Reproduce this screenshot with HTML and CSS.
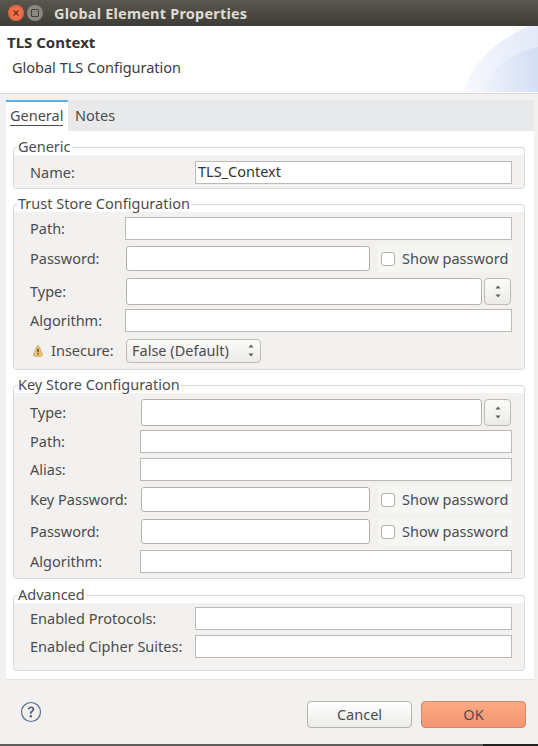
FILE: index.html
```html
<!DOCTYPE html>
<html lang="en">
<head>
  <meta charset="UTF-8">
  <title>Global Element Properties</title>
  <link rel="stylesheet" href="styles.css">
</head>
<body>
  <div class="titlebar">
    <span class="wbtn close">
      <svg width="8" height="8" viewBox="0 0 8 8"><path d="M1.500 1.500l5 5M6.500 1.500l-5 5" stroke="#6e2a16" stroke-width="1.400"/></svg>
    </span>
    <span class="wbtn max"><span class="max-box"></span></span>
    <span class="wtitle">Global Element Properties</span>
  </div>

  <div class="header">
    <svg class="swoosh" width="74" height="66" viewBox="0 0 74 66">
      <defs>
        <linearGradient id="sw1" x1="0" y1="0" x2="1" y2="0"><stop offset="0" stop-color="#f6f8fd"/><stop offset="1" stop-color="#e3e9f8"/></linearGradient>
        <linearGradient id="sw2" x1="0" y1="0" x2="1" y2="0"><stop offset="0" stop-color="#f0f3fb"/><stop offset="1" stop-color="#d3def4"/></linearGradient>
      </defs>
      <path d="M0 66C4 42 30 15 65 0H74V66Z" fill="url(#sw1)"/>
      <path d="M18 66C24 43 48 26 74 21V66Z" fill="url(#sw2)"/>
    </svg>
    <div class="head-title">TLS Context</div>
    <div class="head-desc">Global TLS Configuration</div>
  </div>

  <div class="tabfolder">
    <div class="tabbar">
      <div class="tab active"><span class="tab-u">General</span></div>
      <div class="tab">Notes</div>
    </div>
    <div class="tabbody">

      <fieldset class="group group-generic">
        <legend>Generic</legend>
        <div class="group-body">
          <div class="row">
            <label>Name:</label>
            <div class="input">TLS_Context</div>
          </div>
        </div>
      </fieldset>

      <fieldset class="group group-trust">
        <legend>Trust Store Configuration</legend>
        <div class="group-body">
          <div class="row">
            <label>Path:</label>
            <div class="input"></div>
          </div>
          <div class="row">
            <label>Password:</label>
            <div class="entry"></div>
            <div class="showpw"><span class="check"></span>Show password</div>
          </div>
          <div class="row">
            <label>Type:</label>
            <div class="entry tall"></div>
            <div class="spin">
              <svg width="8" height="13" viewBox="0 0 8 13"><path d="M4 .5L6.500 3.500H1.500ZM4 12.500L1.500 9.500H6.500Z" fill="#5f5c58"/></svg>
            </div>
          </div>
          <div class="row">
            <label>Algorithm:</label>
            <div class="input"></div>
          </div>
          <div class="row">
            <label class="warn-label">
              <svg class="warn" width="10" height="12" viewBox="0 0 10 12"><path d="M5 .7C5.900.7 6.300 1.500 6.600 2.400L9.200 9C9.600 10.200 9 11.300 7.800 11.300H2.200C1 11.300 .4 10.200 .8 9L3.400 2.400C3.700 1.500 4.100.7 5 .7Z" fill="#eec770" stroke="#c09a48" stroke-width=".7"/><path d="M4.300 3.800H5.700V7.300H4.300ZM4.300 8.200H5.700V9.600H4.300Z" fill="#4e3a10"/></svg>
              Insecure:
            </label>
            <div class="combo">False (Default)
              <svg width="8" height="13" viewBox="0 0 8 13"><path d="M4 .5L6.500 3.500H1.500ZM4 12.500L1.500 9.500H6.500Z" fill="#5f5c58"/></svg>
            </div>
          </div>
        </div>
      </fieldset>

      <fieldset class="group group-key">
        <legend>Key Store Configuration</legend>
        <div class="group-body">
          <div class="row">
            <label>Type:</label>
            <div class="entry tall"></div>
            <div class="spin">
              <svg width="8" height="13" viewBox="0 0 8 13"><path d="M4 .5L6.500 3.500H1.500ZM4 12.500L1.500 9.500H6.500Z" fill="#5f5c58"/></svg>
            </div>
          </div>
          <div class="row">
            <label>Path:</label>
            <div class="input"></div>
          </div>
          <div class="row">
            <label>Alias:</label>
            <div class="input"></div>
          </div>
          <div class="row">
            <label>Key Password:</label>
            <div class="entry"></div>
            <div class="showpw"><span class="check"></span>Show password</div>
          </div>
          <div class="row">
            <label>Password:</label>
            <div class="entry"></div>
            <div class="showpw"><span class="check"></span>Show password</div>
          </div>
          <div class="row">
            <label>Algorithm:</label>
            <div class="input"></div>
          </div>
        </div>
      </fieldset>

      <fieldset class="group group-adv">
        <legend>Advanced</legend>
        <div class="group-body">
          <div class="row">
            <label>Enabled Protocols:</label>
            <div class="input"></div>
          </div>
          <div class="row">
            <label>Enabled Cipher Suites:</label>
            <div class="input"></div>
          </div>
        </div>
      </fieldset>

    </div>
  </div>

  <div class="footer">
    <svg class="help" width="22" height="22" viewBox="0 0 22 22">
      <circle cx="11" cy="11" r="9.500" fill="none" stroke="#5a6d8c" stroke-width="1.200"/>
      <path d="M7.800 8.300C8 6.500 9.400 5.600 11.100 5.600c1.900 0 3.200 1.100 3.200 2.700 0 2.300-2.700 2.300-2.700 4.500H9.900c0-3 2.600-3 2.600-4.500 0-.8-.6-1.300-1.400-1.300-.9 0-1.400.5-1.600 1.300Z" fill="#4a5d7e"/>
      <circle cx="10.800" cy="15.200" r="1.200" fill="#4a5d7e"/>
    </svg>
    <div class="btn cancel">Cancel</div>
    <div class="btn ok">OK</div>
  </div>
  <div class="bottom-edge"></div>
</body>
</html>
```

FILE: styles.css
```css
html, body {
  margin: 0;
  padding: 0;
}
body {
  width: 538px;
  height: 746px;
  overflow: hidden;
  background: #f2f1f0;
  font-family: "Noto Sans", "Open Sans", sans-serif;
  font-size: 14.500px;
  color: #4c4c4c;
}
.titlebar {
  height: 26px;
  display: flex;
  align-items: center;
  background: linear-gradient(#5a5750, #3e3c36);
  padding-left: 8px;
}
.wbtn {
  width: 16px;
  height: 16px;
  border-radius: 50%;
  display: flex;
  align-items: center;
  justify-content: center;
  margin-right: 3px;
}
.close {
  background: radial-gradient(#f6805c, #e2572e);
}
.max {
  background: #8a8880;
}
.max-box {
  width: 6px;
  height: 6px;
  border: 1px solid #44423c;
  border-radius: 1px;
}
.wtitle {
  margin-left: 8px;
  color: #dfdbd2;
  font-size: 14.500px;
  font-weight: 700;
  letter-spacing: .2px;
}
.header {
  position: relative;
  height: 68px;
  background: #fff;
  border-bottom: 1px solid #d8d7d5;
  box-sizing: border-box;
}
.swoosh {
  position: absolute;
  right: 0;
  top: 0;
}
.head-title {
  padding: 7px 0 0 7px;
  font-size: 15px;
  font-weight: 700;
  color: #333;
  line-height: 18px;
}
.head-desc {
  padding: 7px 0 0 12px;
  line-height: 19px;
  color: #3c3c3c;
}
.tabfolder {
  margin: 6px 4px 0 6px;
  height: 580px;
  background: #fff;
  box-sizing: border-box;
  border-bottom: 1px solid #e4e3e1;
}
.tabbar {
  display: flex;
  height: 31px;
  background: #e8e9ea;
}
.tab {
  padding: 0 7px;
  line-height: 31px;
}
.tab.active {
  width: 62px;
  box-sizing: border-box;
  padding: 0 4px;
  background: #fff;
  border-top: 2px solid #5cb0dc;
  line-height: 27px;
}
.tab-u {
  border-bottom: 1px solid #4c4c4c;
}
.tabbody {
  padding: 0 9px 0 7px;
}
.group {
  margin: 0;
  padding: 0;
  border: 1px solid #dcdbd9;
  border-top-color: #d8d7d5;
  border-radius: 4px;
  min-width: 0;
}
.group legend {
  padding: 0 1px 2px;
  margin-left: 3px;
  line-height: 14px;
  background: #fff;
}
.group-body {
  display: grid;
  background: #f2f1f0;
  border-radius: 0 0 3px 3px;
}
.group-generic { margin-top: 8px; }
.group-trust { margin-top: 7px; }
.group-key { margin-top: 7px; }
.group-adv { margin-top: 8px; }
.group-generic .group-body {
  grid-template-rows: 23px;
  padding: 6px 0 4px;
}
.group-trust .group-body {
  grid-template-rows: 29px 31px 35px 23px 37px;
  padding-top: 2px;
}
.group-key .group-body {
  grid-template-rows: 29px 29px 27px 33px 31px 29px;
  padding: 5px 0 2px;
}
.group-adv .group-body {
  grid-template-rows: 27px 29px;
  padding: 2px 0 9px;
}
.row {
  display: flex;
  align-items: center;
  padding-left: 16px;
}
.row label {
  flex: none;
  padding-bottom: 2px;
}
.group-generic label { width: 165px; }
.group-trust label { width: 95px; }
.group-key label { width: 110px; }
.group-adv label { width: 165px; }
.input {
  flex: 1;
  height: 23px;
  line-height: 19px;
  box-sizing: border-box;
  margin-right: 12px;
  padding-left: 2px;
  background: #fff;
  border: 1px solid #bdbab5;
  color: #333;
}
.entry {
  width: 244px;
  height: 25px;
  box-sizing: border-box;
  margin-left: 1px;
  background: #fff;
  border: 1px solid #b5b2ac;
  border-radius: 3px;
}
.entry.tall {
  width: 356px;
  height: 27px;
}
.group-key .entry {
  width: 229px;
}
.group-key .entry.tall {
  width: 341px;
}
.showpw {
  margin-left: 8px;
  width: 134px;
  height: 27px;
  box-sizing: border-box;
  padding-bottom: 2px;
  display: flex;
  align-items: center;
  background: #f5f5f4;
  color: #4c4c4c;
}
.check {
  width: 14px;
  height: 14px;
  box-sizing: border-box;
  margin: 2px 7px 0 3px;
  background: #fff;
  border: 1px solid #b5b2ac;
  border-radius: 3px;
}
.spin {
  width: 27px;
  height: 27px;
  box-sizing: border-box;
  margin-left: 2px;
  border: 1px solid #bdbab5;
  border-radius: 4px;
  background: linear-gradient(#fbfbfa, #ecebe9);
  display: flex;
  align-items: center;
  justify-content: center;
}
.combo {
  margin-left: 1px;
  width: 135px;
  height: 24px;
  box-sizing: border-box;
  padding: 0 5px 2px;
  display: flex;
  align-items: center;
  justify-content: space-between;
  border: 1px solid #bdbab5;
  border-radius: 4px;
  background: linear-gradient(#fbfbfa, #ecebe9);
}
.combo svg {
  margin-top: 2px;
}
.warn-label {
  display: flex;
  align-items: center;
  gap: 8px;
}
.warn {
  flex: none;
  margin: 2px 0 0 3px;
}
.footer {
  display: flex;
  align-items: center;
  height: 64px;
  padding: 0 12px 0 20px;
}
.help {
  margin-right: auto;
}
.btn {
  width: 105px;
  height: 27px;
  box-sizing: border-box;
  margin: 5px 0 0 9px;
  text-align: center;
  line-height: 24px;
  border-radius: 4px;
  border: 1px solid #b5b2ac;
  background: linear-gradient(#fff, #ecebe9);
}
.btn.ok {
  border-color: #c98a6e;
  background: linear-gradient(#fda884, #f59470);
}
.bottom-edge {
  height: 2px;
  background: linear-gradient(90deg, #5f5f5c 483px, #222 483px);
}
```
